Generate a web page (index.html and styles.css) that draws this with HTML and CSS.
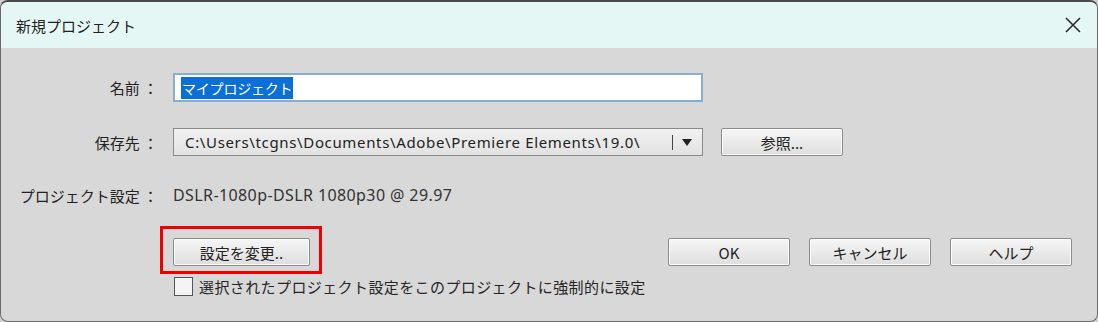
FILE: index.html
```html
<!DOCTYPE html>
<html lang="ja">
<head>
    <meta charset="UTF-8">
    <title>新規プロジェクト</title>
    <link rel="stylesheet" href="styles.css">
</head>
<body>
    <div class="window">
        <header class="titlebar">
            <span class="title">新規プロジェクト</span>
            <svg class="close" width="18" height="18" viewBox="0 0 18 18">
                <path d="M2 2 L16 16 M16 2 L2 16" stroke="#2b2b2b" stroke-width="1.6" fill="none"/>
            </svg>
        </header>

        <div class="content">
            <div class="row row-name">
                <div class="label">名前 ：</div>
                <div class="text-input"><span class="selected">マイプロジェクト</span></div>
            </div>

            <div class="row row-path">
                <div class="label">保存先 ：</div>
                <div class="combo">
                    <span class="combo-text">C:\Users\tcgns\Documents\Adobe\Premiere Elements\19.0\</span>
                    <span class="combo-sep"></span>
                    <svg class="combo-arrow" width="10" height="7" viewBox="0 0 10 7">
                        <path d="M0 0 H10 L5 7 Z" fill="#222"/>
                    </svg>
                </div>
                <button class="btn btn-browse">参照...</button>
            </div>

            <div class="row row-settings">
                <div class="label">プロジェクト設定 ：</div>
                <div class="value">DSLR-1080p-DSLR 1080p30 @ 29.97</div>
            </div>

            <div class="row row-actions">
                <div class="change-wrap">
                    <button class="btn btn-change">設定を変更..</button>
                    <div class="highlight"></div>
                </div>
                <div class="dialog-buttons">
                    <button class="btn">OK</button>
                    <button class="btn">キャンセル</button>
                    <button class="btn">ヘルプ</button>
                </div>
            </div>

            <label class="row row-check">
                <span class="checkbox"></span>
                <span class="check-text">選択されたプロジェクト設定をこのプロジェクトに強制的に設定</span>
            </label>
        </div>
    </div>
</body>
</html>
```

FILE: styles.css
```css
html, body {
    margin: 0;
    height: 100%;
    background: #cfcfcf;
}

body {
    font-family: "Noto Sans CJK JP", "Noto Sans", sans-serif;
    font-size: 15px;
    color: #262626;
}

.window {
    box-sizing: border-box;
    width: 1098px;
    height: 322px;
    border: 1px solid #6a6a6a;
    border-top: 2px solid #4a4a4a;
    border-radius: 8px;
    overflow: hidden;
    background: #d8d8d8;
}

.titlebar {
    height: 46px;
    background: #e5f7f5;
    display: flex;
    align-items: center;
    justify-content: space-between;
    padding: 0 15px 0 15px;
}

.title {
    font-size: 15px;
    color: #222;
}

.content {
    padding-top: 25px;
}

.row {
    display: flex;
    align-items: center;
}

.label {
    width: 157px;
    box-sizing: border-box;
    text-align: right;
    margin-right: 15px;
    white-space: nowrap;
    color: #222;
}

/* 名前 */
.text-input {
    box-sizing: border-box;
    width: 530px;
    height: 29px;
    background: #fff;
    border: 2px solid #86aed0;
    display: flex;
    align-items: center;
    padding-left: 6px;
}

.selected {
    background: #0a6fd6;
    color: #fff;
    font-size: 14px;
    letter-spacing: -0.2px;
    line-height: 22px;
    padding: 0 1px;
}

/* 保存先 */
.row-path {
    margin-top: 26px;
}

.combo {
    box-sizing: border-box;
    width: 530px;
    height: 28px;
    border: 1px solid #8a8a8a;
    background: linear-gradient(#f1f1f1, #e2e2e2);
    display: flex;
    align-items: center;
    padding-left: 11px;
    font-family: "Noto Sans", sans-serif;
    font-size: 15px;
    color: #222;
}

.combo-text {
    flex: 1;
    white-space: nowrap;
    overflow: hidden;
    letter-spacing: 0.65px;
}

.combo-sep {
    width: 1px;
    height: 15px;
    background: #444;
    margin-right: 9px;
}

.combo-arrow {
    margin-right: 10px;
}

.btn {
    box-sizing: border-box;
    width: 122px;
    height: 28px;
    border: 1px solid #8c8c8c;
    border-radius: 2px;
    background: linear-gradient(#f6f6f6, #dedede);
    box-shadow: inset 0 0 0 1px #fbfbfb;
    font-family: "Noto Sans CJK JP", "Noto Sans", sans-serif;
    font-size: 15px;
    color: #222;
    padding: 0;
}

.btn-browse {
    margin-left: 18px;
}

/* プロジェクト設定 */
.row-settings {
    margin-top: 27px;
    height: 24px;
}

.value {
    font-family: "Noto Sans", sans-serif;
    font-size: 16px;
    letter-spacing: 0.4px;
    color: #333;
}

/* ボタン行 */
.row-actions {
    margin-top: 31px;
    padding-left: 172px;
}

.change-wrap {
    position: relative;
}

.btn-change {
    width: 137px;
}

.highlight {
    position: absolute;
    top: -12px;
    bottom: -8px;
    left: -13px;
    right: -12px;
    border: 3px solid #ee0000;
}

.dialog-buttons {
    display: flex;
    gap: 19px;
    margin-left: 358px;
}

/* チェックボックス */
.row-check {
    margin-top: 10px;
    padding-left: 173px;
}

.checkbox {
    box-sizing: border-box;
    width: 19px;
    height: 19px;
    border: 1px solid #555;
    background: #f4f4f4;
    margin-right: 6px;
}

.check-text {
    letter-spacing: 0.4px;
}
```
